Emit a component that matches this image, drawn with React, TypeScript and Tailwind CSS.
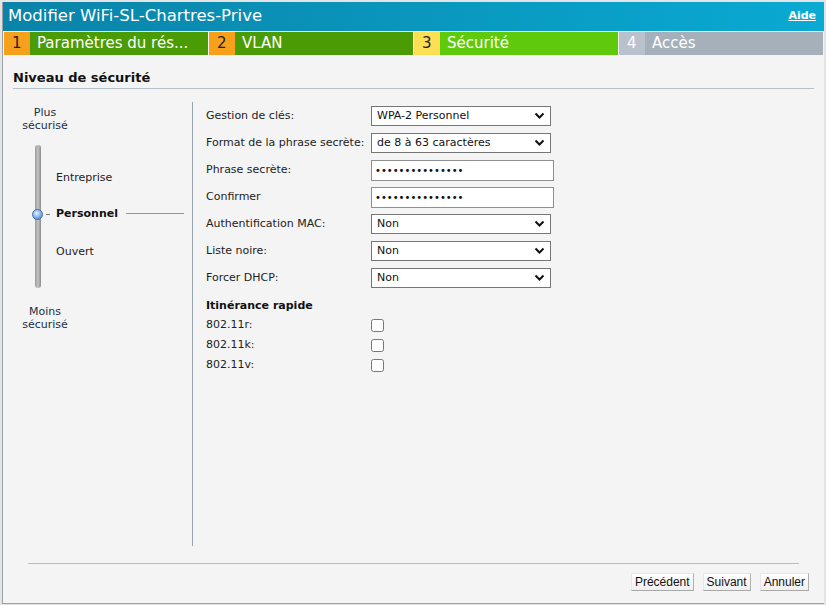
import React from "react";

const font = { fontFamily: '"DejaVu Sans", Verdana, sans-serif' };

const steps = [
  { n: "1", label: "Paramètres du rés...", num: "bg-[#f7a01c] text-[#222]", body: "bg-[#4b9b05]" },
  { n: "2", label: "VLAN", num: "bg-[#f7a01c] text-[#222]", body: "bg-[#4b9b05]" },
  { n: "3", label: "Sécurité", num: "bg-[#fddf55] text-[#222]", body: "bg-[#5fc90b]" },
  { n: "4", label: "Accès", num: "bg-[#b9c2cc] text-white", body: "bg-[#a6b0ba]" },
];

const rows: { label: string; kind: "select" | "password"; value?: string }[] = [
  { label: "Gestion de clés:", kind: "select", value: "WPA-2 Personnel" },
  { label: "Format de la phrase secrète:", kind: "select", value: "de 8 à 63 caractères" },
  { label: "Phrase secrète:", kind: "password" },
  { label: "Confirmer", kind: "password" },
  { label: "Authentification MAC:", kind: "select", value: "Non" },
  { label: "Liste noire:", kind: "select", value: "Non" },
  { label: "Forcer DHCP:", kind: "select", value: "Non" },
];

function Chevron() {
  return (
    <svg width="11" height="8" viewBox="0 0 11 8" className="shrink-0">
      <path d="M1.5 1.5 L5.5 5.5 L9.5 1.5" fill="none" stroke="#111" strokeWidth="2" />
    </svg>
  );
}

function Select({ value }: { value: string }) {
  return (
    <div className="w-[180px] h-[20px] bg-white border border-[#767676] flex items-center justify-between pl-[5px] pr-[5px] text-[11px] text-[#111]">
      <span>{value}</span>
      <Chevron />
    </div>
  );
}

function Password() {
  return (
    <input
      type="password"
      readOnly
      value="xxxxxxxxxxxxxxx"
      className="w-[183px] h-[21px] bg-white border border-[#8f8f8f] px-[3px] text-[10px] text-[#111] outline-none"
    />
  );
}

function SecuritySlider() {
  return (
    <div className="w-[189px] pl-[11px] text-[11px] text-[#222]" style={font}>
      <div className="w-[62px] text-center leading-[13px] mt-[1px] text-[#1a2f45]">
        Plus
        <br />
        sécurisé
      </div>
      <div className="flex mt-[13px] h-[143px]">
        <div className="relative w-[32px]">
          <div className="absolute left-[21px] top-0 w-[6px] h-[143px] rounded-[3px] bg-gradient-to-r from-[#9a9a9a] via-[#c4c4c4] to-[#8a8a8a]" />
          <div className="absolute left-[18px] top-[64px] w-[11px] h-[11px] rounded-full border border-[#3d6fb5] bg-[radial-gradient(circle_at_40%_35%,#e4f0ff,#7aa8e6_60%,#3a6cc0)]" />
          <div className="absolute left-[32px] top-[69px] w-[4px] h-px bg-[#777]" />
        </div>
        <div className="flex flex-col pl-[10px] pr-[8px] flex-1">
          <div className="mt-[26px] h-[13px] leading-[13px]">Entreprise</div>
          <div className="mt-[23px] h-[13px] leading-[13px] flex items-center">
            <span className="font-bold text-[#111]">Personnel</span>
            <span className="ml-[8px] flex-1 h-px bg-[#8a9aaa]" />
          </div>
          <div className="mt-[25px] h-[13px] leading-[13px]">Ouvert</div>
        </div>
      </div>
      <div className="w-[62px] text-center leading-[13px] mt-[17px] text-[#1a2f45]">
        Moins
        <br />
        sécurisé
      </div>
    </div>
  );
}

function SecurityForm() {
  return (
    <div className="pl-[13px] pt-[1px] text-[11px] text-[#222]" style={font}>
      {rows.map((r) => (
        <div key={r.label} className="flex items-center h-[27px]">
          <div className="w-[165px] whitespace-nowrap">{r.label}</div>
          {r.kind === "select" ? <Select value={r.value!} /> : <Password />}
        </div>
      ))}
      <div className="font-bold text-[#111] mt-[4px] leading-[20px]">Itinérance rapide</div>
      {["802.11r:", "802.11k:", "802.11v:"].map((l) => (
        <div key={l} className="flex items-center h-[20px]">
          <div className="w-[165px]">{l}</div>
          <input type="checkbox" className="w-[13px] h-[13px] m-0" />
        </div>
      ))}
    </div>
  );
}

export default function App() {
  return (
    <div className="w-[826px] h-[605px] bg-[#e4e4e4] pt-[2px] pl-[2px] overflow-hidden">
      <div className="w-[822px] h-[602px] bg-[#f4f4f4] border-l border-b border-[#9aa2aa] flex flex-col">
        <div className="h-[29px] bg-gradient-to-r from-[#0a83a8] to-[#09aad3] flex items-center justify-between pl-[5px] pr-[8px]">
          <span className="text-white text-[16.5px]" style={font}>
            Modifier WiFi-SL-Chartres-Prive
          </span>
          <span className="text-white text-[11px] font-bold underline" style={font}>
            Aide
          </span>
        </div>
        <div className="flex gap-[1px] pl-[1px] mt-[1px] h-[23px]">
          {steps.map((s) => (
            <div key={s.n} className="flex w-[204px]">
              <div className={`w-[26px] flex items-center pl-[8px] text-[15px] ${s.num}`} style={font}>
                {s.n}
              </div>
              <div className={`flex-1 flex items-center pl-[7px] text-white text-[15px] ${s.body}`} style={font}>
                {s.label}
              </div>
            </div>
          ))}
        </div>
        <div className="mx-[10px] mt-[13px] border-b border-[#b4c0cc] text-[13px] font-bold text-[#111]" style={font}>
          Niveau de sécurité
        </div>
        <div className="flex mt-[13px] h-[444px]">
          <div className="border-r border-[#98a4b0] pt-[3px]">
            <SecuritySlider />
          </div>
          <SecurityForm />
        </div>
        <div className="mx-[25px] mt-[17px] border-t border-[#b4bcc4]" />
        <div className="flex justify-end gap-[9px] pr-[15px] mt-[9px]" style={{ fontFamily: '"Liberation Sans", Arial, sans-serif' }}>
          {["Précédent", "Suivant", "Annuler"].map((b) => (
            <button
              key={b}
              className="h-[18px] px-[3px] text-[12px] leading-[16px] text-[#111] bg-gradient-to-b from-white to-[#f0f0f0] border border-[#e6e6e6] border-r-[#b0b0b0] border-b-[#a8a8a8]"
            >
              {b}
            </button>
          ))}
        </div>
      </div>
    </div>
  );
}
